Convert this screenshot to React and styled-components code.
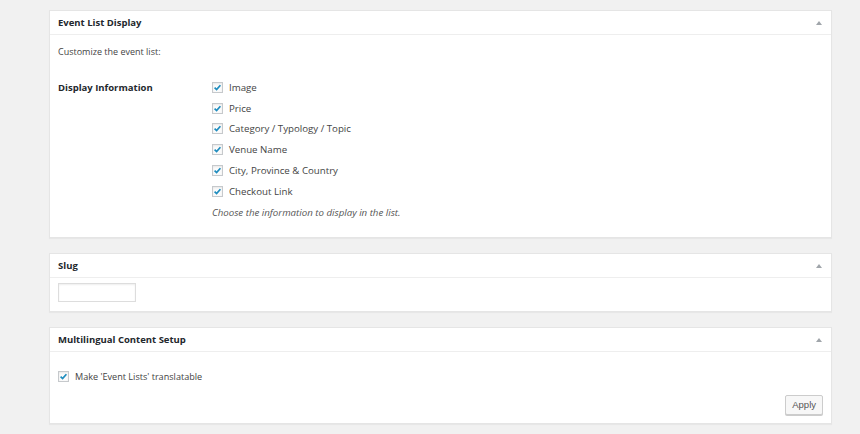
import React from "react"
import styled, { createGlobalStyle } from "styled-components"

const GlobalStyle = createGlobalStyle`
  html, body {
    margin: 0;
    padding: 0;
    background: #f1f1f1;
  }
  body {
    font-family: "Open Sans", "Liberation Sans", sans-serif;
    color: #444;
  }
`

const Page = styled.div`
  display: flex;
  flex-direction: column;
  gap: 15px;
  padding: 10px 28px 11px 49px;
  min-height: 434px;
  box-sizing: border-box;
`

const Panel = styled.div`
  background: #fff;
  border: 1px solid #e5e5e5;
  box-shadow: 0 1px 1px rgba(0, 0, 0, 0.04);
`

const PanelHeader = styled.div`
  height: 23px;
  display: flex;
  align-items: center;
  justify-content: space-between;
  padding: 0 9px 0 8px;
  border-bottom: 1px solid #eee;
`

const PanelTitle = styled.h2`
  margin: 0;
  font-size: 9.5px;
  font-weight: 700;
  color: #23282d;
`

const Toggle = styled.span`
  width: 0;
  height: 0;
  border-left: 3px solid transparent;
  border-right: 3px solid transparent;
  border-bottom: 4px solid #a0a5aa;
  margin-top: 1px;
`

const PanelBody = styled.div`
  padding: ${p => p.$pad || "0 8px"};
`

const Intro = styled.p`
  margin: 10px 0 0;
  font-size: 9px;
  line-height: 14px;
`

const FieldRow = styled.div`
  display: grid;
  grid-template-columns: 154px 1fr;
  margin-top: 18px;
`

const FieldLabel = styled.div`
  font-size: 9.5px;
  font-weight: 700;
  color: #23282d;
  line-height: 21px;
`

const OptionList = styled.div`
  display: flex;
  flex-direction: column;
`

const Option = styled.label`
  display: flex;
  align-items: center;
  gap: 6px;
  height: ${p => p.$h || "20.8px"};
  font-size: ${p => p.$size || "9.7px"};
  color: #444;
`

const Box = styled.span`
  width: 11px;
  height: 11px;
  box-sizing: border-box;
  border: 1px solid #c6c9cc;
  background: #fbfbfb;
  box-shadow: inset 0 1px 2px rgba(0, 0, 0, 0.08);
  display: flex;
  align-items: center;
  justify-content: center;
  flex-shrink: 0;
`

const Help = styled.p`
  margin: 0;
  font-size: 9.7px;
  font-style: italic;
  color: #555;
  line-height: 21px;
`

const SlugInput = styled.input`
  display: block;
  width: 78px;
  height: 19px;
  box-sizing: border-box;
  border: 1px solid #ddd;
  box-shadow: inset 0 1px 2px rgba(0, 0, 0, 0.07);
  outline: none;
`

const Actions = styled.div`
  display: flex;
  justify-content: flex-end;
  margin-top: 12px;
`

const Button = styled.button`
  height: 20px;
  padding: 0 6px;
  border: 1px solid #ccc;
  border-radius: 2px;
  background: #f7f7f7;
  box-shadow: 0 1px 0 #ccc;
  font-family: "Liberation Sans", Arial, sans-serif;
  font-size: 9.5px;
  color: #555;
`

function Check() {
  return (
    <Box>
      <svg width="9" height="9" viewBox="0 0 9 9">
        <path d="M1.6 4.6 L3.6 6.6 L7.4 2.2" fill="none" stroke="#1e8cbe" strokeWidth="1.7" />
      </svg>
    </Box>
  )
}

const options = [
  "Image",
  "Price",
  "Category / Typology / Topic",
  "Venue Name",
  "City, Province & Country",
  "Checkout Link",
]

export default function App() {
  return (
    <Page>
      <GlobalStyle />
      <Panel>
        <PanelHeader>
          <PanelTitle>Event List Display</PanelTitle>
          <Toggle />
        </PanelHeader>
        <PanelBody $pad="0 8px 14px">
          <Intro>Customize the event list:</Intro>
          <FieldRow>
            <FieldLabel>Display Information</FieldLabel>
            <OptionList>
              {options.map(o => (
                <Option key={o}>
                  <Check />
                  {o}
                </Option>
              ))}
              <Help>Choose the information to display in the list.</Help>
            </OptionList>
          </FieldRow>
        </PanelBody>
      </Panel>

      <Panel>
        <PanelHeader>
          <PanelTitle>Slug</PanelTitle>
          <Toggle />
        </PanelHeader>
        <PanelBody $pad="5px 8px 9px">
          <SlugInput type="text" />
        </PanelBody>
      </Panel>

      <Panel>
        <PanelHeader>
          <PanelTitle>Multilingual Content Setup</PanelTitle>
          <Toggle />
        </PanelHeader>
        <PanelBody $pad="19px 8px 8px">
          <Option $h="12px" $size="9.1px">
            <Check />
            Make 'Event Lists' translatable
          </Option>
          <Actions>
            <Button>Apply</Button>
          </Actions>
        </PanelBody>
      </Panel>
    </Page>
  )
}
